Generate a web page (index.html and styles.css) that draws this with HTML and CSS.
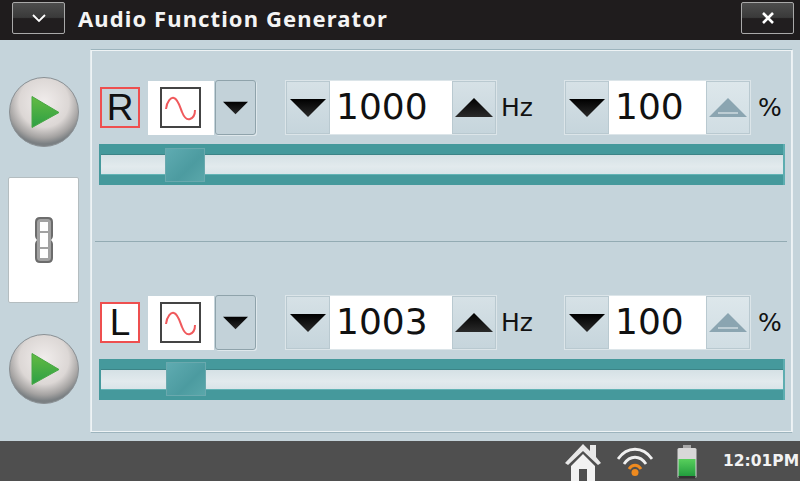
FILE: index.html
```html
<!DOCTYPE html>
<html lang="en">
<head>
    <meta charset="UTF-8">
    <title>Audio Function Generator</title>
    <link rel="stylesheet" href="styles.css">
</head>
<body>
    <svg class="defs" width="0" height="0">
        <defs>
            <radialGradient id="knob" cx="50%" cy="36%" r="60%">
                <stop offset="0" stop-color="#f1edec"/>
                <stop offset="0.6" stop-color="#dcd7d5"/>
                <stop offset="0.86" stop-color="#a5a3a2"/>
                <stop offset="1" stop-color="#7b8083"/>
            </radialGradient>
            <linearGradient id="playFill" x1="0" y1="0" x2="0" y2="1">
                <stop offset="0" stop-color="#64bb42"/>
                <stop offset="1" stop-color="#2c9f45"/>
            </linearGradient>
            <linearGradient id="blackTri" x1="0" y1="0" x2="0" y2="1">
                <stop offset="0" stop-color="#000"/>
                <stop offset="1" stop-color="#2a2a2a"/>
            </linearGradient>
            <linearGradient id="battFill" x1="0" y1="0" x2="0" y2="1">
                <stop offset="0" stop-color="#58cf5c"/>
                <stop offset="1" stop-color="#1f9a3c"/>
            </linearGradient>
            <symbol id="play" viewBox="0 0 70 70">
                <circle cx="35" cy="35" r="34.5" fill="url(#knob)" stroke="#8a9094" stroke-width="1"/>
                <path d="M23 19.5 L50 35.5 L23 50.5 Z" fill="url(#playFill)" stroke="#48a844" stroke-width="1" stroke-linejoin="round"/>
            </symbol>
            <symbol id="wave" viewBox="0 0 42 42">
                <rect x="1" y="1" width="39" height="39" fill="#fff" stroke="#444" stroke-width="2"/>
                <path d="M6 22 C7 14 11 10 14 11 C18 12 20 20 22 25 C24 30 27 33 30 32 C33 31 35 28 35 23" fill="none" stroke="#f0595c" stroke-width="2"/>
            </symbol>
            <symbol id="triDown" viewBox="0 0 36 20">
                <path d="M0 1 H36 L18 19 Z" fill="url(#blackTri)"/>
            </symbol>
            <symbol id="triUp" viewBox="0 0 38 20">
                <path d="M0 19 L19 0 L38 19 Z" fill="url(#blackTri)"/>
            </symbol>
            <symbol id="triUpOff" viewBox="0 0 38 20">
                <path d="M0 19 L19 0 L38 19 Z" fill="#8ba5b1"/>
                <path d="M9 15 H29" stroke="#dfe8ec" stroke-width="1.2"/>
            </symbol>
        </defs>
    </svg>

    <div class="titlebar">
        <button class="title-btn menu-btn">
            <svg width="16" height="10" viewBox="0 0 16 10"><path d="M2 2 L8 8 L14 2" fill="none" stroke="#fff" stroke-width="1.8"/></svg>
        </button>
        <h1>Audio Function Generator</h1>
        <button class="title-btn close-btn">
            <svg width="14" height="14" viewBox="0 0 14 14"><path d="M2 2 L12 12 M12 2 L2 12" fill="none" stroke="#fff" stroke-width="2.6"/></svg>
        </button>
    </div>

    <div class="main">
        <div class="side">
            <svg class="play" width="70" height="70"><use href="#play"/></svg>
            <div class="link-box">
                <svg width="18" height="46" viewBox="0 0 18 46">
                    <path d="M5 0 H13 Q18 0 18 5 V19 Q18 21 16 23 Q18 25 18 27 V41 Q18 46 13 46 H5 Q0 46 0 41 V27 Q0 25 2 23 Q0 21 0 19 V5 Q0 0 5 0 Z" fill="#6c6c6c"/>
                    <path d="M5.5 2 H12.5 Q16 2 16 5.5 V40.5 Q16 44 12.5 44 H5.5 Q2 44 2 40.5 V5.5 Q2 2 5.5 2 Z" fill="#a2a2a2"/>
                    <rect x="5" y="5" width="8" height="9" fill="#fff"/>
                    <rect x="5" y="16" width="8" height="14" fill="#fff"/>
                    <rect x="5" y="32" width="8" height="9" fill="#fff"/>
                </svg>
            </div>
            <svg class="play" width="70" height="70"><use href="#play"/></svg>
        </div>

        <div class="panel">
            <div class="channel channel-r">
                <div class="controls">
                    <div class="ch-label">R</div>
                    <div class="wave-box"><svg width="42" height="42"><use href="#wave"/></svg></div>
                    <button class="drop"><svg width="25" height="14"><use href="#triDown"/></svg></button>
                    <div class="spinner freq">
                        <button class="spin"><svg width="36" height="20"><use href="#triDown"/></svg></button>
                        <div class="value">1000</div>
                        <button class="spin"><svg width="38" height="20"><use href="#triUp"/></svg></button>
                    </div>
                    <div class="unit hz">Hz</div>
                    <div class="spinner amp">
                        <button class="spin"><svg width="36" height="20"><use href="#triDown"/></svg></button>
                        <div class="value">100</div>
                        <button class="spin off"><svg width="38" height="20"><use href="#triUpOff"/></svg></button>
                    </div>
                    <div class="unit pct">%</div>
                </div>
                <div class="slider"><div class="track"></div><div class="thumb"></div></div>
            </div>

            <div class="divider"></div>

            <div class="channel channel-l">
                <div class="controls">
                    <div class="ch-label">L</div>
                    <div class="wave-box"><svg width="42" height="42"><use href="#wave"/></svg></div>
                    <button class="drop"><svg width="25" height="14"><use href="#triDown"/></svg></button>
                    <div class="spinner freq">
                        <button class="spin"><svg width="36" height="20"><use href="#triDown"/></svg></button>
                        <div class="value">1003</div>
                        <button class="spin"><svg width="38" height="20"><use href="#triUp"/></svg></button>
                    </div>
                    <div class="unit hz">Hz</div>
                    <div class="spinner amp">
                        <button class="spin"><svg width="36" height="20"><use href="#triDown"/></svg></button>
                        <div class="value">100</div>
                        <button class="spin off"><svg width="38" height="20"><use href="#triUpOff"/></svg></button>
                    </div>
                    <div class="unit pct">%</div>
                </div>
                <div class="slider"><div class="track"></div><div class="thumb"></div></div>
            </div>
        </div>
    </div>

    <div class="statusbar">
        <svg class="home" width="38" height="38" viewBox="0 0 38 38">
            <path d="M1 20 L19 1 L26 8 V2 H32 V14 L37 20 L34 22 L19 8 L4 22 Z" fill="#e8e8e8"/>
            <path d="M7 23 L19 11 L31 23 V38 H23 V26 H15 V38 H7 Z" fill="#f2f2f2"/>
        </svg>
        <svg class="wifi" width="36" height="30" viewBox="0 0 36 30">
            <path d="M1 12 C10 -1 26 -1 35 12" fill="none" stroke="#f0f0f0" stroke-width="2.8"/>
            <path d="M7 17 C13 8 23 8 29 17" fill="none" stroke="#f0f0f0" stroke-width="2.8"/>
            <path d="M12 22 C15.5 17 20.5 17 24 22" fill="none" stroke="#ee8a1f" stroke-width="3"/>
            <circle cx="18" cy="25.5" r="3.5" fill="#ee8a1f"/>
        </svg>
        <svg class="batt" width="20" height="34" viewBox="0 0 20 34">
            <rect x="6" y="0" width="8" height="4" fill="#a8a8a8"/>
            <rect x="0.5" y="3" width="19" height="30" rx="1.5" fill="#d8d8d8"/>
            <rect x="1.5" y="14" width="17" height="18" fill="url(#battFill)"/>
            <rect x="1.5" y="31" width="17" height="2.5" fill="#333"/>
        </svg>
        <div class="clock">12:01PM</div>
    </div>
</body>
</html>
```

FILE: styles.css
```css
* {
    margin: 0;
    padding: 0;
    box-sizing: border-box;
}

body {
    width: 800px;
    height: 481px;
    overflow: hidden;
    background: #c5d4db;
    color: #000;
    font-family: 'DejaVu Sans', sans-serif;
    display: flex;
    flex-direction: column;
}

button {
    border: none;
    background: none;
    display: flex;
    align-items: center;
    justify-content: center;
}

.defs {
    position: absolute;
}

/* title bar */
.titlebar {
    height: 40px;
    flex: none;
    background: #1f1c1d;
    display: flex;
    align-items: center;
    padding: 0 6px 0 12px;
}

.titlebar h1 {
    flex: 1;
    margin: -4px 0 0 13px;
    color: #f4f4f4;
    font-family: 'Noto Sans', sans-serif;
    font-size: 22px;
    font-weight: 700;
    letter-spacing: 1.1px;
    line-height: 36px;
}

.title-btn {
    width: 53px;
    height: 32px;
    margin-top: -5px;
    border: 1px solid #a9a9a9;
    border-radius: 2px;
    background: linear-gradient(#4d4d4d, #3a3a3a 48%, #211e1f 52%, #211e1f);
}

/* main area */
.main {
    flex: 1;
    display: flex;
}

.side {
    width: 90px;
    flex: none;
    padding-top: 37px;
    display: flex;
    flex-direction: column;
    align-items: center;
}

.play {
    display: block;
    flex: none;
    margin-right: 2px;
}

.link-box {
    width: 71px;
    height: 126px;
    flex: none;
    margin: 30px 3px 31px 0;
    background: #fff;
    border: 1px solid #b4bdc0;
    border-radius: 2px;
    display: flex;
    align-items: center;
    justify-content: center;
}

.panel {
    width: 703px;
    height: 384px;
    margin-top: 9px;
    border: 1px solid #eaf0f3;
    border-top-color: #9db4bd;
    border-left-color: #e4ecef;
    border-bottom-color: #9db4bd;
    box-shadow: inset -1px -1px 0 #eef3f5, inset 1px 1px 0 #eef3f5;
    padding: 30px 7px 0 8px;
}

.channel-l {
    margin-top: 53px;
}

.channel-r {
    height: 105px;
}

.divider {
    height: 1px;
    margin: 56px 0 0 -4px;
    width: 692px;
    background: #93abb3;
}

.controls {
    height: 55px;
    display: flex;
    align-items: center;
}

.controls > * {
    flex: none;
}

.ch-label {
    width: 40px;
    height: 41px;
    margin-left: 1px;
    background: #fff;
    border: 2px solid #ee4f4f;
    color: #111;
    font-family: 'Liberation Sans', sans-serif;
    font-size: 37px;
    line-height: 38px;
    text-align: center;
}

.channel-r .ch-label {
    background: transparent;
}

.wave-box {
    width: 66px;
    height: 54px;
    margin-left: 8px;
    background: #fff;
    display: flex;
    align-items: center;
    justify-content: center;
    padding-top: 1px;
}

.drop {
    width: 41px;
    height: 55px;
    margin-left: 1px;
    background: #c3d2d9;
    border: 1px solid #8fa3ab;
    border-radius: 3px;
    box-shadow: 1px 1px 0 #dfe8ec;
}

.spinner {
    height: 55px;
    display: flex;
    align-items: stretch;
    border: 1px solid #dce5e9;
}

.freq {
    width: 212px;
    margin-left: 29px;
}

.amp {
    width: 187px;
}

.spin {
    width: 44px;
    flex: none;
    background: linear-gradient(#d6e1e6, #c6d5dc);
    border: 1px solid #b9c9d0;
}

.spin.off {
    background: linear-gradient(#dde7eb, #d0dde3);
}

.value {
    flex: 1;
    background: #fff;
    font-size: 36px;
    line-height: 51px;
    padding-left: 6px;
    color: #111;
}

.unit {
    font-size: 25px;
    color: #111;
}

.hz {
    width: 67px;
    padding-left: 4px;
}

.pct {
    padding-left: 7px;
}

.slider {
    position: relative;
    height: 41px;
    width: 686px;
    margin-top: 9px;
    background: #45999c;
    border-right: 2px solid #5dadb0;
    padding: 10px 0 10px 2px;
}

.track {
    height: 21px;
    background: linear-gradient(#d5e1e5, #e2eaed 60%, #d9e4e8);
    border-top: 1px solid #3c8487;
    border-bottom: 1px solid #62b3b5;
}

/* thumb lies over the track */
.thumb {
    position: absolute;
    left: 66px;
    top: 4px;
    width: 40px;
    height: 34px;
    background: linear-gradient(135deg, #5fabb1, #4c9ba0 60%, #5aa7aa);
    border: 1px solid #6aa9ae;
}

.channel-l .thumb {
    left: 67px;
    top: 3px;
}

/* status bar */
.statusbar {
    height: 40px;
    flex: none;
    background: #4f4f4f;
    display: flex;
    align-items: flex-end;
    padding-left: 564px;
}

.home {
    display: block;
    flex: none;
}

.wifi {
    display: block;
    flex: none;
    margin: 0 0 4px 15px;
}

.batt {
    display: block;
    flex: none;
    margin: 0 0 2px 24px;
}

.clock {
    margin-left: 26px;
    height: 40px;
    line-height: 41px;
    color: #f2f2f2;
    font-size: 15.5px;
    font-weight: 700;
    white-space: nowrap;
}
```
